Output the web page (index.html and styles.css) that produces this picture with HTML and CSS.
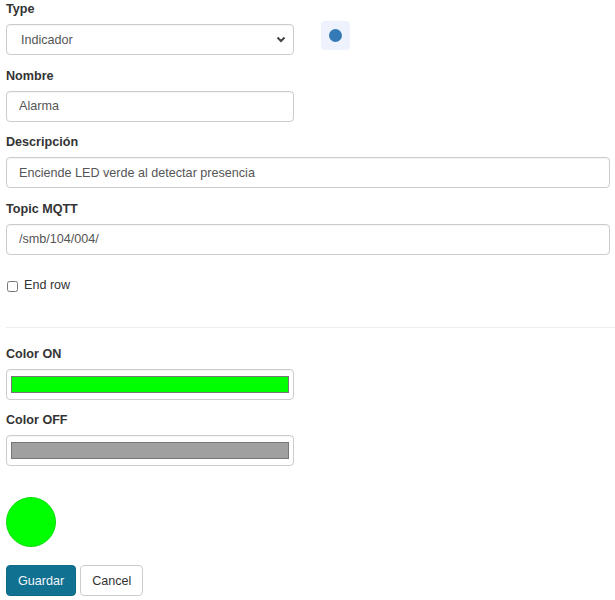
FILE: index.html
```html
<!DOCTYPE html>
<html lang="es">
<head>
<meta charset="utf-8">
<title>Editar widget</title>
<link rel="stylesheet" href="styles.css">
</head>
<body>
<form class="form">
  <div class="type-row">
    <div class="field field-half">
      <label class="label" for="type">Type</label>
      <select id="type" class="control select">
        <option>Indicador</option>
      </select>
    </div>
    <div class="preview-badge"><span class="preview-dot"></span></div>
  </div>

  <div class="field field-half">
    <label class="label" for="nombre">Nombre</label>
    <input id="nombre" class="control" type="text" value="Alarma">
  </div>

  <div class="field field-wide">
    <label class="label" for="desc">Descripción</label>
    <input id="desc" class="control" type="text" value="Enciende LED verde al detectar presencia">
  </div>

  <div class="field field-wide">
    <label class="label" for="topic">Topic MQTT</label>
    <input id="topic" class="control" type="text" value="/smb/104/004/">
  </div>

  <label class="check-row">
    <input type="checkbox" class="check">
    <span>End row</span>
  </label>

  <hr class="divider">

  <div class="field field-half">
    <label class="label" for="con">Color ON</label>
    <input id="con" class="control color" type="color" value="#00ff00">
  </div>

  <div class="field field-half">
    <label class="label" for="coff">Color OFF</label>
    <input id="coff" class="control color" type="color" value="#a0a0a0">
  </div>

  <div class="led"></div>

  <div class="actions">
    <button type="button" class="btn btn-primary">Guardar</button>
    <button type="button" class="btn btn-default">Cancel</button>
  </div>
</form>
</body>
</html>
```

FILE: styles.css
```css
html, body {
  margin: 0;
  padding: 0;
  background: #ffffff;
}

body {
  font-family: "Liberation Sans", Arial, Helvetica, sans-serif;
  font-size: 12.6px;
  line-height: 18px;
  color: #333333;
}

.form {
  display: flex;
  flex-direction: column;
  padding: 0 0 0 6px;
}

.type-row {
  display: flex;
  align-items: flex-start;
  gap: 27px;
}

.field {
  display: flex;
  flex-direction: column;
  margin-bottom: 11.5px;
}

.field-half {
  width: 288px;
}

.field-wide {
  margin-right: 5px;
}

.label {
  display: block;
  font-weight: 700;
  line-height: 18px;
  margin-bottom: 6px;
  color: #333333;
}

.control {
  box-sizing: border-box;
  width: 100%;
  height: 31px;
  margin: 0;
  padding: 0 12px;
  border: 1px solid #cccccc;
  border-radius: 4px;
  background: #ffffff;
  font-family: inherit;
  font-size: 12.6px;
  color: #555555;
  box-shadow: inset 0 1px 1px rgba(0, 0, 0, 0.04);
}

.select {
  padding-left: 14px;
  appearance: none;
  -webkit-appearance: none;
  background-image: url("data:image/svg+xml,%3Csvg xmlns='http://www.w3.org/2000/svg' width='10' height='7' viewBox='0 0 10 7'%3E%3Cpath d='M1.5 1.5 L5 5 L8.5 1.5' fill='none' stroke='%23444' stroke-width='2'/%3E%3C/svg%3E");
  background-repeat: no-repeat;
  background-position: right 7px center;
  background-size: 10px 7px;
}

.preview-badge {
  width: 29px;
  height: 29px;
  margin-top: 21px;
  border-radius: 4px;
  background: #edf2fc;
  display: flex;
  align-items: center;
  justify-content: center;
}

.preview-dot {
  width: 13px;
  height: 13px;
  border-radius: 50%;
  background: #337ab7;
}

.check-row {
  display: flex;
  align-items: center;
  gap: 6px;
  margin-top: 10px;
  height: 18px;
  color: #333333;
}

.check {
  width: 11px;
  height: 11px;
  margin: 2px 0 0 1px;
}

.divider {
  border: 0;
  border-top: 1px solid #eeeeee;
  margin: 33px 0 16.5px 0;
}

.color {
  padding: 6px 4px 6px 4px;
  cursor: pointer;
}

.color::-webkit-color-swatch-wrapper {
  padding: 0;
}

.color::-webkit-color-swatch {
  border: 1px solid #777777;
  border-radius: 0;
}

.led {
  width: 50px;
  height: 50px;
  box-sizing: border-box;
  border-radius: 50%;
  background: #00ff00;
  border: 1px solid #11dd11;
  margin-top: 19.5px;
}

.actions {
  display: flex;
  gap: 4px;
  margin-top: 18px;
}

.btn {
  height: 31px;
  padding: 0 11px;
  border-radius: 4px;
  font-family: inherit;
  font-size: 12.6px;
  cursor: pointer;
}

.btn-primary {
  background: #117190;
  border: 1px solid #0f6885;
  color: #f2f6fa;
}

.btn-default {
  background: #ffffff;
  border: 1px solid #cccccc;
  color: #333333;
}
```
